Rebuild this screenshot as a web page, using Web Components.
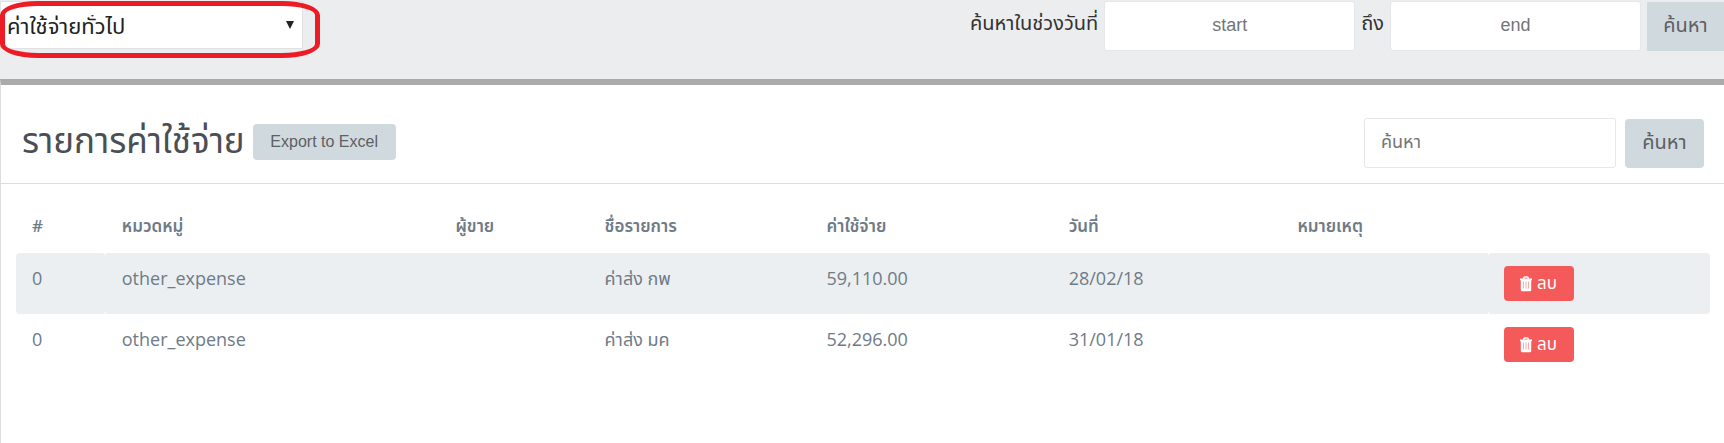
<!DOCTYPE html>
<html lang="th">
<head>
<meta charset="utf-8">
<title>รายการค่าใช้จ่าย</title>
<style>
  html { background: #fff; }
  body { margin: 0; font-family: "Open Sans", "Noto Sans", "Noto Sans Thai", sans-serif; font-size: 18px; line-height: 24px; color: #333; }
</style>
</head>
<body>
<expense-page></expense-page>
<script>
const define = (name, html, setup) => {
  const template = document.createElement('template');
  template.innerHTML = html;
  customElements.define(name, class extends HTMLElement {
    constructor() {
      super();
      this.attachShadow({ mode: 'open' }).append(template.content.cloneNode(true));
    }
    connectedCallback() { if (setup) setup(this, this.shadowRoot); }
  });
};

define('action-button', `
  <style>
    :host { display: inline-block; }
    button { display: block; box-sizing: border-box; width: 100%; height: var(--button-height, 49px); margin: 0; padding: 0 16px var(--button-lift, 2px);
      border: 0; border-radius: var(--button-radius, 4px); background: #d0d9de; color: #5e6062;
      font-family: "Liberation Sans", "Noto Sans Thai", sans-serif; font-size: var(--button-size, 20px); line-height: 24px; white-space: nowrap; }
  </style>
  <button type="button"><slot></slot></button>`);

define('delete-button', `
  <style>
    :host { display: inline-block; vertical-align: top; }
    button { display: flex; align-items: center; gap: 5px; box-sizing: border-box; width: 70px; height: 35px; margin: 0; padding: 0 16px;
      border: 0; border-radius: 4px; background: #f45a5a; color: #fff; font: 17px/20px "Liberation Sans", "Noto Sans Thai", sans-serif; white-space: nowrap; }
    svg { flex: none; }
  </style>
  <button type="button"><svg width="12" height="16" viewBox="0 0 12 16" aria-hidden="true">
    <path d="M3.800 3V1.800Q3.800 1 4.600 1h2.800q.8 0 .8.8V3" fill="none" stroke="#fff" stroke-width="1.4"/>
    <path fill="#fff" d="M0 2.500h12v1.700h-.8V14q0 1.200-1.200 1.200H2Q.8 15.200.8 14V4.200H0z"/>
    <path d="M3.500 5.500v7M6 5.500v7M8.500 5.500v7" stroke="#f45a5a" stroke-opacity=".5"/></svg><slot></slot></button>`);

define('text-field', `
  <style>
    :host { display: block; }
    input { display: block; box-sizing: border-box; width: 100%; height: 50px; margin: 0; padding: 0 16px 2px; border: 1px solid #e4e8ea;
      border-radius: 3px; background: #fff; color: #555; text-align: var(--field-align, left);
      font: 18px/24px "Liberation Sans", "Noto Sans Thai", sans-serif; }
    input::placeholder { color: #757575; opacity: 1; }
  </style>
  <input type="text">`,
  (host, root) => {
    const input = root.querySelector('input');
    input.placeholder = host.getAttribute('placeholder');
    input.setAttribute('aria-label', host.getAttribute('label'));
  });

define('category-select', `
  <style>
    :host { display: block; position: relative; width: 303px; }
    select { display: block; appearance: none; box-sizing: border-box; width: 100%; height: 48px; margin: 0; padding: 3px 32px 0 6px;
      border: 1px solid #e0e2e4; border-radius: 0; background: #fff; color: #222; font: 22px/24px "Liberation Sans", "Noto Sans Thai", sans-serif; }
    svg { position: absolute; right: 9px; top: 20px; pointer-events: none; }
    .ring { position: absolute; left: 0; top: 0; width: 320px; height: 57px; box-sizing: border-box; border: 5px solid #ed1c24;
      border-radius: 38px / 14px; pointer-events: none; }
  </style>
  <select aria-label="ประเภทค่าใช้จ่าย"><option>ค่าใช้จ่ายทั่วไป</option></select>
  <svg width="8" height="8" viewBox="0 0 8 8" aria-hidden="true"><path d="M0 0h8L4 8z" fill="#222"/></svg>
  <div class="ring"></div>`);

define('filter-bar', `
  <style>
    :host { display: flex; justify-content: space-between; align-items: flex-start; box-sizing: border-box; padding: 1px 0 28px; background: #ebedee; }
    .range { display: flex; align-items: center; gap: 6px; }
    .range span { color: #333; font-size: 20px; padding-bottom: 6px; white-space: nowrap; }
    text-field { width: 251px; --field-align: center; }
    action-button { --button-radius: 0; width: 77px; }
  </style>
  <category-select></category-select>
  <div class="range">
    <span>ค้นหาในช่วงวันที่</span><text-field placeholder="start" label="start"></text-field>
    <span>ถึง</span><text-field placeholder="end" label="end"></text-field>
    <action-button>ค้นหา</action-button>
  </div>`);

define('panel-header', `
  <style>
    :host { display: flex; justify-content: space-between; align-items: center; box-sizing: border-box; padding: 33px 20px 15px 21px; border-bottom: 1px solid #dcdddd; }
    div { display: flex; align-items: center; gap: 9px; }
    .heading { padding-bottom: 2px; gap: 8px; }
    h1 { margin: 0; padding-bottom: 4px; font-size: 35px; line-height: 40px; font-weight: 400; color: #4b4f54; white-space: nowrap; }
    .export { --button-height: 36px; --button-size: 16px; --button-lift: 0; width: 143px; }
    text-field { width: 252px; }
    .search { width: 79px; }
  </style>
  <div class="heading"><h1>รายการค่าใช้จ่าย</h1><action-button class="export">Export to Excel</action-button></div>
  <div><text-field placeholder="ค้นหา" label="ค้นหา"></text-field><action-button class="search">ค้นหา</action-button></div>`);

define('expense-table', `
  <style>
    :host { display: block; padding: 21px 14px 64px 15px; }
    table { width: 100%; table-layout: fixed; border-collapse: separate; border-spacing: 0; color: #6f7b87; }
    th, td { box-sizing: border-box; padding: 0 16px; text-align: left; vertical-align: top; white-space: nowrap; }
    th { height: 48px; padding-top: 9px; font-size: 17px; font-weight: 600; }
    td { height: 61px; padding-top: 13px; }
    tbody tr:nth-child(odd) td { background: #ebeff2; }
    td:first-child, td:last-child { border-radius: 4px; }
  </style>
  <table>
    <colgroup><col style="width:5.3%"><col style="width:19.7%"><col style="width:8.8%"><col style="width:13.1%"><col style="width:14.3%"><col style="width:13.5%"><col style="width:12.2%"><col style="width:13.1%"></colgroup>
    <thead><tr><th>#</th><th>หมวดหมู่</th><th>ผู้ขาย</th><th>ชื่อรายการ</th><th>ค่าใช้จ่าย</th><th>วันที่</th><th>หมายเหตุ</th><th></th></tr></thead>
    <tbody>
      <tr><td>0</td><td>other_expense</td><td></td><td>ค่าส่ง กพ</td><td>59,110.00</td><td>28/02/18</td><td></td><td><delete-button>ลบ</delete-button></td></tr>
      <tr><td>0</td><td>other_expense</td><td></td><td>ค่าส่ง มค</td><td>52,296.00</td><td>31/01/18</td><td></td><td><delete-button>ลบ</delete-button></td></tr>
    </tbody>
  </table>`);

define('expense-page', `
  <style>
    :host { display: flex; flex-direction: column; min-height: 100vh; }
    main { flex: 1; border-left: 1px solid #ddd; border-top: 6px solid #aaa; background: #fff; }
  </style>
  <filter-bar></filter-bar>
  <main><panel-header></panel-header><expense-table></expense-table></main>`);
</script>
</body>
</html>
